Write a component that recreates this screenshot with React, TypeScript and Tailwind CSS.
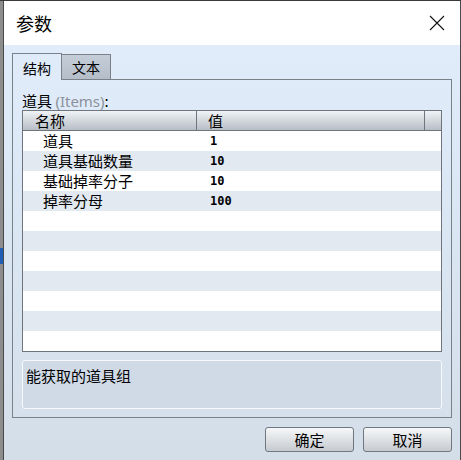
const rows = [
  { name: "道具", value: "1" },
  { name: "道具基础数量", value: "10" },
  { name: "基础掉率分子", value: "10" },
  { name: "掉率分母", value: "100" },
];

const cjk = "font-['Noto_Sans_CJK_SC','Noto_Sans',sans-serif]";

export default function App() {
  const filler = Array.from({ length: 11 - rows.length });

  return (
    <div className={`w-[461px] h-[460px] flex border-t border-[#3a3a3a] overflow-hidden ${cjk}`}>
      {/* strip of the window behind */}
      <div className="w-[3px] bg-[#8d8d8d] flex flex-col">
        <div className="mt-[247px] h-[16px] bg-[#1f5fb8]" />
      </div>

      <div className="flex-1 flex flex-col border-l border-r border-[#4a4a4a]">
        {/* title bar */}
        <div className="h-[44px] bg-white flex items-center justify-between pl-[12px] pr-[15px]">
          <span className="text-[18px] leading-none text-black">参数</span>
          <svg width="16" height="16" viewBox="0 0 16 16" className="mt-[-1px]">
            <path d="M1 1 L15 15 M15 1 L1 15" stroke="#111" strokeWidth="1.1" />
          </svg>
        </div>

        <div className="flex-1 flex flex-col bg-gradient-to-b from-[#e1ecfb] to-[#d3dee9] pt-[9px] px-[8px]">
          {/* tabs */}
          <div className="flex items-end h-[26px] relative z-10">
            <div className="w-[50px] h-[27px] border border-b-0 border-[#7b8189] bg-[#e0ebfa] flex items-center justify-center text-[14px] text-black pt-[2px]">
              结构
            </div>
            <div className="w-[50px] h-[26px] -ml-px border border-[#7b8189] bg-gradient-to-b from-[#c5ced8] to-[#b4bec9] flex items-center justify-center text-[14px] text-black">
              文本
            </div>
          </div>

          {/* tab page */}
          <div className="h-[339px] -mt-px border border-[#7b8189] bg-gradient-to-b from-[#e0ebfa] to-[#d5e0ec] flex flex-col pl-[9px] pr-[9px] pt-[12px]">
            <div className="h-[18px] text-[15px] leading-[18px] text-black">
              道具 <span className="text-[#8b919b] font-['Noto_Sans',sans-serif]">(Items)</span>:
            </div>

            <div className="w-[420px] border border-[#6e757d] bg-white flex flex-col">
              <div className="h-[20px] flex border-b border-[#6e757d] bg-gradient-to-b from-[#f0f3f6] to-[#b7bec6] text-[15px] leading-[19px] text-black">
                <div className="w-[174px] border-r border-[#6e757d] pl-[12px]">名称</div>
                <div className="w-[228px] border-r border-[#6e757d] pl-[11px]">值</div>
                <div className="flex-1" />
              </div>
              {rows.map((r, i) => (
                <div
                  key={r.name}
                  className={`h-[20px] flex items-center ${i % 2 ? "bg-[#e2e9f0]" : "bg-white"}`}
                >
                  <div className="w-[174px] pl-[20px] text-[15px] text-black">{r.name}</div>
                  <div className="pl-[13px] text-[12px] font-bold font-['DejaVu_Sans_Mono',monospace] text-black">
                    {r.value}
                  </div>
                </div>
              ))}
              {filler.map((_, i) => (
                <div
                  key={i}
                  className={`h-[20px] ${(i + rows.length) % 2 ? "bg-[#e2e9f0]" : "bg-white"}`}
                />
              ))}
            </div>

            {/* description */}
            <div className="mt-[8px] h-[49px] w-[420px] rounded-[3px] border border-[#f6f9fc] bg-[#cfdae6] px-[3px] pt-[6px] text-[15px] leading-[18px] text-black">
              能获取的道具组
            </div>
          </div>

          {/* buttons */}
          <div className="flex justify-end gap-[9px] mt-[9px]">
            <button className="w-[89px] h-[25px] rounded-[3px] border border-[#707780] bg-gradient-to-b from-[#f6f7f8] to-[#c6cbd1] text-[15px] leading-none text-black">
              确定
            </button>
            <button className="w-[89px] h-[25px] rounded-[3px] border border-[#707780] bg-gradient-to-b from-[#f6f7f8] to-[#c6cbd1] text-[15px] leading-none text-black">
              取消
            </button>
          </div>
        </div>
      </div>
    </div>
  );
}
